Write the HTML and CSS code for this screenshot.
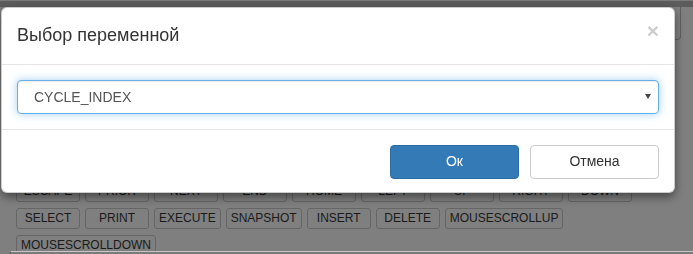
FILE: index.html
```html
<!DOCTYPE html>
<html lang="ru">
<head>
  <meta charset="UTF-8">
  <meta name="viewport" content="width=device-width, initial-scale=1.0">
  <title>Выбор переменной</title>
  <link rel="stylesheet" href="styles.css">
</head>
<body>

  <div class="app">
    <div class="topbar"></div>
    <div class="tools">
      <span class="tool-btn"></span>
    </div>

    <div class="keys">
      <button type="button" class="key">ESCAPE</button>
      <button type="button" class="key">PRIOR</button>
      <button type="button" class="key">NEXT</button>
      <button type="button" class="key">END</button>
      <button type="button" class="key">HOME</button>
      <button type="button" class="key">LEFT</button>
      <button type="button" class="key">UP</button>
      <button type="button" class="key">RIGHT</button>
      <button type="button" class="key">DOWN</button>
      <button type="button" class="key">SELECT</button>
      <button type="button" class="key">PRINT</button>
      <button type="button" class="key">EXECUTE</button>
      <button type="button" class="key">SNAPSHOT</button>
      <button type="button" class="key">INSERT</button>
      <button type="button" class="key">DELETE</button>
      <button type="button" class="key">MOUSESCROLLUP</button>
      <button type="button" class="key">MOUSESCROLLDOWN</button>
    </div>
  </div>
  <div class="statusline"></div>

  <!-- modal -->
  <div class="modal">
    <div class="modal-content">
      <div class="modal-header">
        <h4 class="modal-title">Выбор переменной</h4>
        <button type="button" class="close">&times;</button>
      </div>
      <div class="modal-body">
        <div class="select-wrap">
          <select class="form-control">
            <option>CYCLE_INDEX</option>
          </select>
        </div>
      </div>
      <div class="modal-footer">
        <button type="button" class="btn btn-primary">Ок</button>
        <button type="button" class="btn btn-default">Отмена</button>
      </div>
    </div>
  </div>

</body>
</html>
```

FILE: styles.css
```css
html,body{margin: 0; padding: 0; height: 100%; overflow: hidden;}
*{box-sizing: border-box;}
body{
  background-color: #7f7f7f;
  font-family: "Liberation Sans", Arial, sans-serif;
  font-size: 14px;
  color: #333;
}

/* page under the backdrop (already dimmed) */
.app{
  display: flex;
  flex-direction: column;
}
.topbar{
  height: 7px;
  background-color: #5c5c5c;
  border-top: 1px solid #7a7a7a;
}
.tools{
  display: flex;
  justify-content: flex-end;
  padding-right: 12px;
  height: 33px;
}
.tool-btn{
  width: 40px;
  height: 33px;
  border: 1px solid #5f5f5f;
  border-top: 0;
  border-radius: 0 0 4px 4px;
}
.keys{
  display: flex;
  flex-wrap: wrap;
  column-gap: 5px;
  row-gap: 6px;
  margin: 141px 16px 0 16px;
}
.key{
  min-width: 64px;
  height: 21px;
  padding: 1px 4px;
  font-family: inherit;
  font-size: 12px;
  line-height: 17px;
  color: #1a1a1a;
  background-color: transparent;
  border: 1px solid #666;
  border-radius: 3px;
}
.statusline{
  position: fixed;
  left: 10px;
  right: 0;
  bottom: 0;
  height: 3px;
  border-top: 1px solid #c6c6c6;
  border-left: 1px solid #5a5a5a;
  background-color: #7a7a7a;
}

/* modal */
.modal{
  position: fixed;
  top: 7px;
  left: 1px;
  width: 674px;
}
.modal-content{
  background-color: #fff;
  border: 1px solid rgba(0,0,0,.2);
  border-radius: 6px;
  box-shadow: 0 4px 10px rgba(0,0,0,.45);
}
.modal-header{
  display: flex;
  justify-content: space-between;
  align-items: flex-start;
  padding: 15px;
  border-bottom: 1px solid #e5e5e5;
}
.modal-title{
  margin: 0;
  font-size: 18px;
  font-weight: 500;
  line-height: 1.42857;
}
.close{
  margin-top: -3px;
  padding: 0;
  border: 0;
  background: none;
  font-family: inherit;
  font-size: 21px;
  font-weight: bold;
  line-height: 1;
  color: #000;
  opacity: .2;
}
.modal-body{
  padding: 15px;
}
.select-wrap{
  position: relative;
}
.select-wrap::after{
  content: '';
  position: absolute;
  right: 8px;
  top: 14px;
  border-left: 3px solid transparent;
  border-right: 3px solid transparent;
  border-top: 5px solid #444;
}
.form-control{
  display: block;
  width: 100%;
  height: 34px;
  padding: 6px 12px 6px 16px;
  font-family: inherit;
  font-size: 14px;
  color: #555;
  background-color: #fff;
  border: 1px solid #66afe9;
  border-radius: 4px;
  outline: 0;
  box-shadow: inset 0 1px 1px rgba(0,0,0,.075), 0 0 8px rgba(102,175,233,.6);
  -webkit-appearance: none;
  appearance: none;
}
.modal-footer{
  display: flex;
  justify-content: flex-end;
  gap: 11px;
  padding: 15px 15px 13px;
  border-top: 1px solid #e5e5e5;
}
.btn{
  width: 129px;
  height: 34px;
  padding: 6px 12px;
  font-family: inherit;
  font-size: 14px;
  line-height: 1.42857;
  border: 1px solid transparent;
  border-radius: 4px;
}
.btn-primary{
  color: #fff;
  background-color: #337ab7;
  border-color: #2e6da4;
}
.btn-default{
  color: #333;
  background-color: #fff;
  border-color: #ccc;
}
```
